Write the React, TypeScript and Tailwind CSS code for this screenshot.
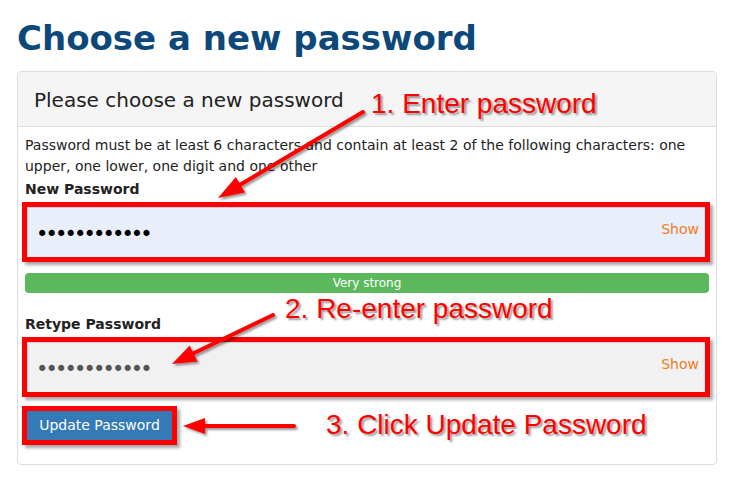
import React from "react";

const dots = "••••••••••••";

function PasswordField({ bg, dotColor }: { bg: string; dotColor: string }) {
  return (
    <div className="-ml-[3px] w-[688px] border-[5px] border-[#ff0000] shadow-[3px_3px_3px_rgba(0,0,0,0.35)]">
      <div
        className={`flex h-[50px] items-center justify-between pl-[9px] pr-[6px] shadow-[inset_1px_1px_1px_rgba(0,0,0,0.15)] ${bg}`}
      >
        <span className={`mt-[3px] text-[21px] leading-[24px] tracking-[-2.9px] ${dotColor}`}>{dots}</span>
        <span className="mb-[5px] text-[14px] leading-[21px] text-[#f07c1c]">Show</span>
      </div>
    </div>
  );
}

function Arrows() {
  return (
    <svg className="pointer-events-none absolute left-0 top-0" width="738" height="480">
      <defs>
        <filter id="sh" x="-20%" y="-20%" width="140%" height="140%">
          <feDropShadow dx="2" dy="2" stdDeviation="1.3" floodColor="#000" floodOpacity="0.4" />
        </filter>
      </defs>
      <g filter="url(#sh)" fill="#ff0000" stroke="#ff0000" strokeLinecap="round">
        {/* 1 */}
        <line x1="363" y1="112" x2="238" y2="186" strokeWidth="4" />
        <polygon points="218,198 235.8,177 245,192.5" stroke="none" />
        {/* 2 */}
        <line x1="273" y1="315" x2="192" y2="354" strokeWidth="4" />
        <polygon points="172,364 189.7,345.4 197.5,361.6" stroke="none" />
        {/* 3 */}
        <line x1="294" y1="426" x2="203" y2="426" strokeWidth="4" />
        <polygon points="183,426 205,418 205,434" stroke="none" />
      </g>
    </svg>
  );
}

const note =
  "absolute whitespace-nowrap font-['Liberation_Sans',Arial,sans-serif] text-[28px] leading-[32px] text-[#ff0000] [text-shadow:2px_2px_2px_rgba(0,0,0,0.4)]";

export default function App() {
  return (
    <div className="relative h-[480px] w-[738px] overflow-hidden bg-white font-['DejaVu_Sans',sans-serif]">
      <h1 className="mb-[13px] ml-[17px] pt-[18px] text-[34px] font-bold leading-[40px] text-[#0c497a]">
        Choose a new password
      </h1>

      <div className="ml-[17px] w-[700px] overflow-hidden rounded-[4px] border border-[#dddddd]">
        <div className="border-b border-[#dddddd] bg-[#f5f5f5] pb-[12px] pl-[16px] pt-[14px] text-[20px] leading-[28px] text-[#222]">
          Please choose a new password
        </div>

        <div className="px-[7px] pb-[19px] pt-[8px] text-[14px] leading-[21px] text-[#222]">
          <p>
            Password must be at least 6 characters and contain at least 2 of the following characters: one
            upper, one lower, one digit and one other
          </p>
          <div className="mt-[2px] font-bold">New Password</div>
          <div className="mt-[2px]">
            <PasswordField bg="bg-[#e8eefa]" dotColor="text-black" />
          </div>

          <div className="mt-[11px] flex h-[20px] items-center justify-center rounded-[4px] bg-[#5cb85c] text-[12px] text-white">
            Very strong
          </div>

          <div className="mt-[21px] font-bold">Retype Password</div>
          <div className="mt-[2px]">
            <PasswordField bg="bg-[#f1f1f1]" dotColor="text-[#555]" />
          </div>

          <div className="mt-[9px] -ml-[3px] w-fit border-[5px] border-[#ff0000] shadow-[3px_3px_3px_rgba(0,0,0,0.35)]">
            <button className="flex h-[29px] w-[145px] items-center justify-center bg-[#337ab7] text-[14px] text-white">
              Update Password
            </button>
          </div>
        </div>
      </div>

      <Arrows />
      <div className={`${note} left-[371px] top-[88px]`}>1. Enter password</div>
      <div className={`${note} left-[285px] top-[293px]`}>2. Re-enter password</div>
      <div className={`${note} left-[326px] top-[409px]`}>3. Click Update Password</div>
    </div>
  );
}
